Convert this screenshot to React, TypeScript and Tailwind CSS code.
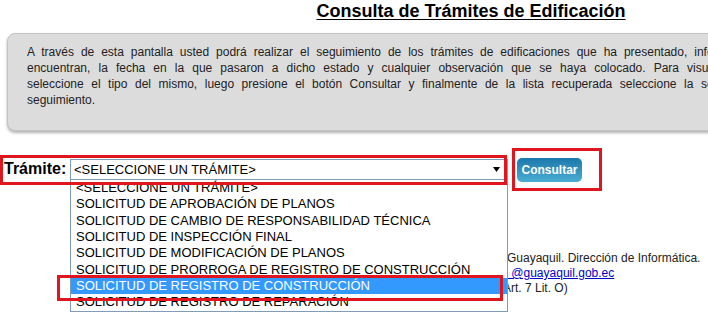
import React from 'react'

const OPTIONS = [
  '<SELECCIONE UN TRÁMITE>',
  'SOLICITUD DE APROBACIÓN DE PLANOS',
  'SOLICITUD DE CAMBIO DE RESPONSABILIDAD TÉCNICA',
  'SOLICITUD DE INSPECCIÓN FINAL',
  'SOLICITUD DE MODIFICACIÓN DE PLANOS',
  'SOLICITUD DE PRORROGA DE REGISTRO DE CONSTRUCCIÓN',
  'SOLICITUD DE REGISTRO DE CONSTRUCCIÓN',
  'SOLICITUD DE REGISTRO DE REPARACIÓN',
]

const SELECTED = 6

export default function App() {
  return (
    <div className="relative w-[708px] h-[321px] overflow-hidden bg-white font-['Liberation_Sans',Arial,sans-serif] text-black">
      <div className="w-[942px]">
        {/* Title */}
        <h1 className="pt-[1px] text-center text-[18px] leading-[20px] font-bold underline underline-offset-2">
          Consulta de Trámites de Edificación
        </h1>

        {/* Info box - each line justified like the original paragraph */}
        <div className="mt-[12px] ml-[7px] w-[928px] rounded-[8px] border border-[#c4c4c4] bg-[#dcdcdc] px-[19px] pt-[10px] pb-[22px] text-[12px] leading-4 text-[#222] shadow-[0_2px_3px_rgba(0,0,0,0.3)]">
          <div className="w-[879px] text-justify [text-align-last:justify]">
            A través de esta pantalla usted podrá realizar el seguimiento de los trámites de edificaciones que ha presentado, informándole el estado en el que se
          </div>
          <div className="w-[862px] text-justify [text-align-last:justify]">
            encuentran, la fecha en la que pasaron a dicho estado y cualquier observación que se haya colocado. Para visualizar el detalle de un trámite,
          </div>
          <div className="w-[841px] text-justify [text-align-last:justify]">
            seleccione el tipo del mismo, luego presione el botón Consultar y finalmente de la lista recuperada seleccione la solicitud a la que desea dar
          </div>
          <div>seguimiento.</div>
        </div>

        {/* Trámite row */}
        <div className="mt-[28px] flex items-start">
          <label className="w-[70px] pl-[4px] text-[16px] leading-5 font-bold">Trámite:</label>
          <div className="relative z-10 w-[438px]">
            <div className="flex h-[21px] items-center border border-[#7f9db9] bg-white pl-[3px] pr-[7px] text-[13px]">
              <span className="flex-1 whitespace-nowrap">{OPTIONS[0]}</span>
              <svg width="7" height="5" viewBox="0 0 7 5">
                <path d="M0 0 H7 L3.5 5 Z" fill="#000" />
              </svg>
            </div>
            <ul className="absolute left-0 top-[20px] w-full border border-[#7f9db9] bg-white">
              {OPTIONS.map((o, i) => (
                <li
                  key={o}
                  className={
                    i === SELECTED
                      ? 'h-[16.33px] whitespace-nowrap bg-[#3399ff] pl-[5px] text-[13px] leading-[16.33px] text-white'
                      : 'h-[16.33px] whitespace-nowrap pl-[5px] text-[13px] leading-[16.33px] text-black'
                  }
                >
                  {o}
                </li>
              ))}
            </ul>
          </div>
          <button className="-mt-px ml-[9px] h-[24px] w-[65px] rounded-[5px] bg-gradient-to-b from-[#1b78ab] to-[#4aaed3] text-[12px] font-bold text-white">
            Consultar
          </button>
        </div>

        {/* Footer (mostly covered by the open list) */}
        <div className="mt-[69px] text-[12px] leading-[15px] text-[#222]">
          <div className="flex whitespace-nowrap">
            <span className="w-[504px] overflow-hidden text-right">© 2015 M.I. Municipalidad de</span>
            <span className="ml-[3px]">Guayaquil. Dirección de Informática.</span>
          </div>
          <div className="flex whitespace-nowrap">
            <span className="w-[508px] overflow-hidden text-right">
              Contacto: <a className="text-[#0000cc] underline">webmaster</a>
            </span>
            <a className="text-[#0000cc] underline">{'\u00a0@guayaquil.gob.ec'}</a>
          </div>
          <div className="flex whitespace-nowrap">
            <span className="w-[503px] overflow-hidden text-right">Ley Orgánica de Transparencia (</span>
            <span>Art. 7 Lit. O)</span>
          </div>
        </div>
      </div>

      {/* Red annotation frames */}
      <div className="pointer-events-none absolute left-0 top-[155px] z-20 h-[30px] w-[507px] border-[3px] border-[#e0161f]" />
      <div className="pointer-events-none absolute left-[512px] top-[148px] z-20 h-[43px] w-[90px] border-[3px] border-[#e0161f]" />
      <div className="pointer-events-none absolute left-[57px] top-[275px] z-20 h-[26px] w-[446px] border-[3px] border-[#e0161f]" />
    </div>
  )
}
